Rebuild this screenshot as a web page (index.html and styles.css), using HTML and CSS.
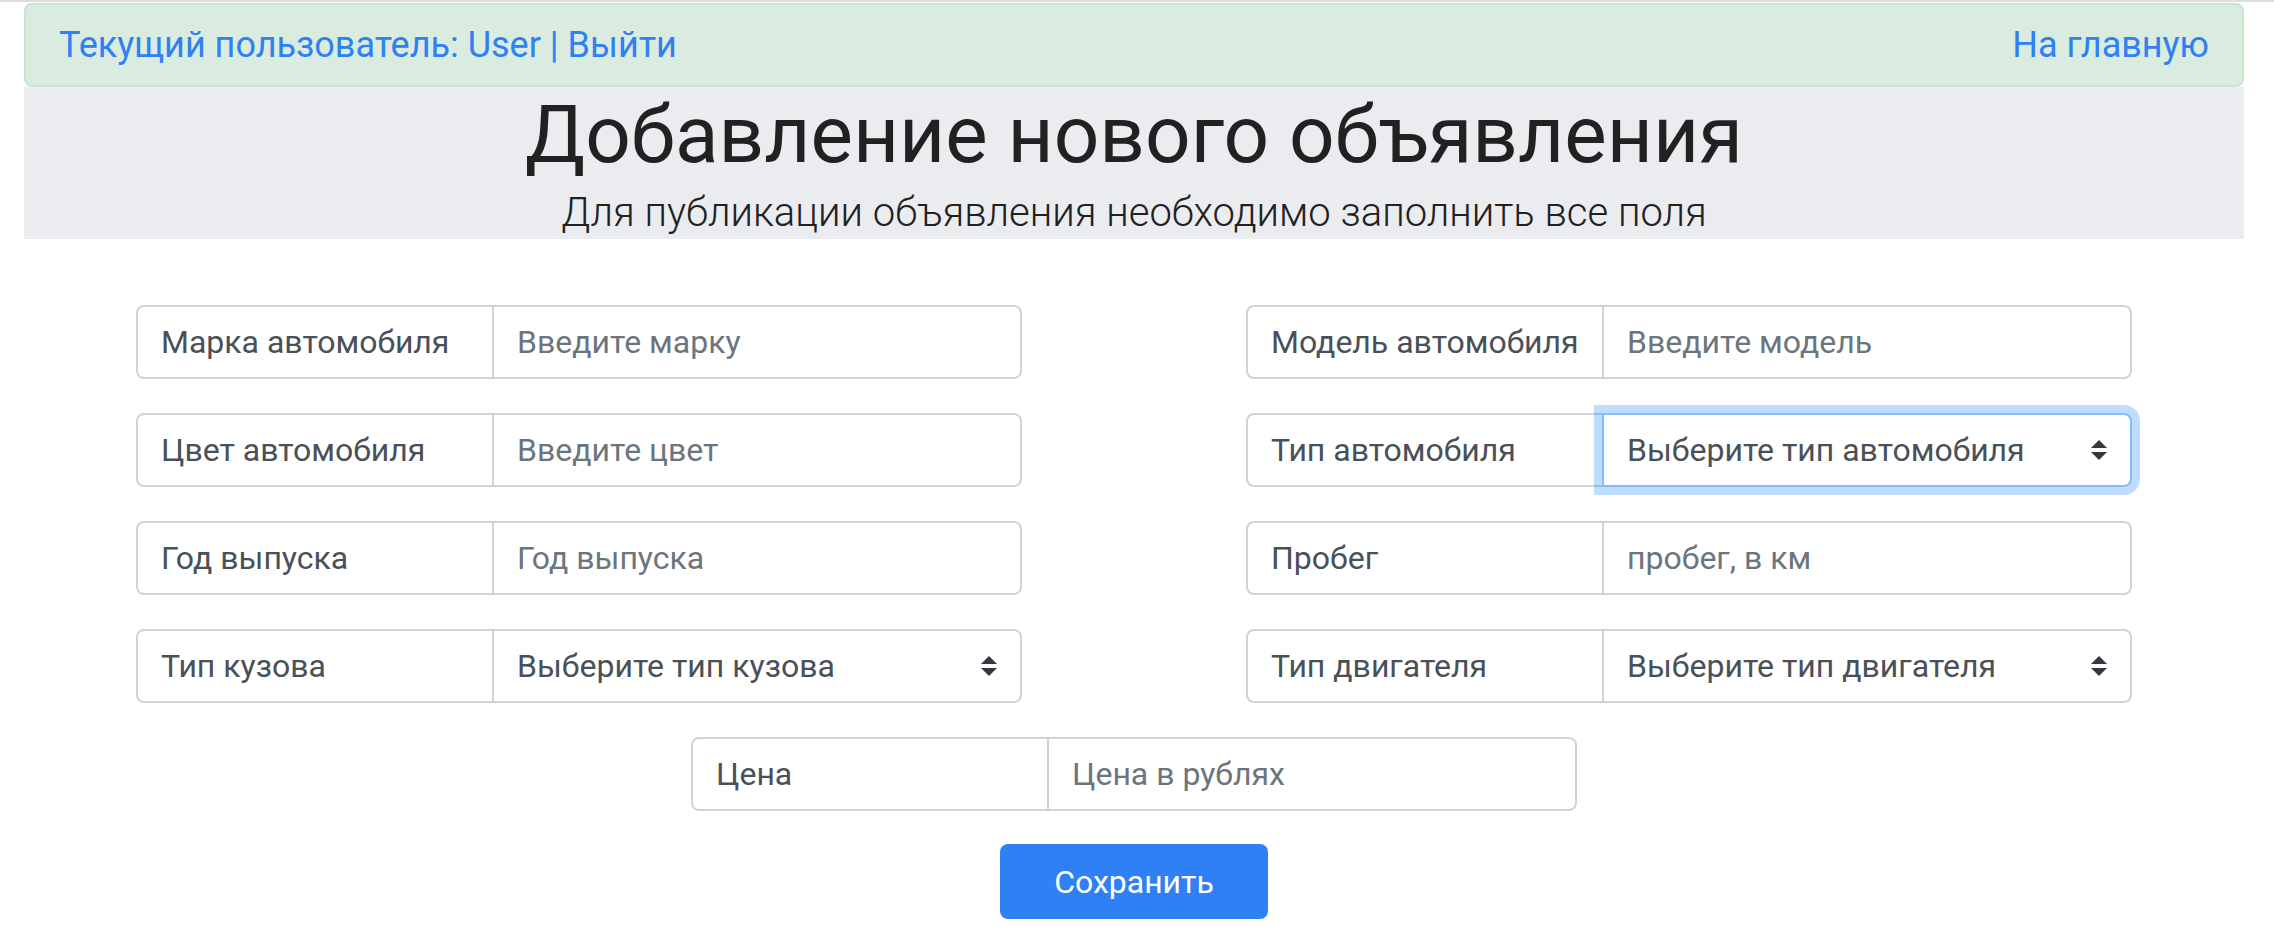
FILE: index.html
```html
<!DOCTYPE html>
<html lang="ru">
<head>
<meta charset="utf-8">
<title>Добавление нового объявления</title>
<link rel="stylesheet" href="styles.css">
</head>
<body>
<div class="topline"></div>
<div class="page">
  <div class="alert">
    <a class="alert-link" href="#">Текущий пользователь: User | Выйти</a>
    <a class="alert-link" href="#">На главную</a>
  </div>
  <div class="hero">
    <h1 class="hero-title">Добавление нового объявления</h1>
    <p class="hero-lead">Для публикации объявления необходимо заполнить все поля</p>
  </div>
  <form class="form">
    <div class="grid">
      <div class="group"><span class="label">Марка автомобиля</span><input class="field" placeholder="Введите марку"></div>
      <div class="group"><span class="label">Модель автомобиля</span><input class="field" placeholder="Введите модель"></div>
      <div class="group"><span class="label">Цвет автомобиля</span><input class="field" placeholder="Введите цвет"></div>
      <div class="group"><span class="label">Тип автомобиля</span><div class="field select focused"><span class="select-text">Выберите тип автомобиля</span><svg class="arrows" viewBox="0 0 4 5" width="16" height="20"><path d="M2 0L0 2h4zm0 5L0 3h4z" fill="#343a40"/></svg></div></div>
      <div class="group"><span class="label">Год выпуска</span><input class="field" placeholder="Год выпуска"></div>
      <div class="group"><span class="label">Пробег</span><input class="field" placeholder="пробег, в км"></div>
      <div class="group"><span class="label">Тип кузова</span><div class="field select"><span class="select-text">Выберите тип кузова</span><svg class="arrows" viewBox="0 0 4 5" width="16" height="20"><path d="M2 0L0 2h4zm0 5L0 3h4z" fill="#343a40"/></svg></div></div>
      <div class="group"><span class="label">Тип двигателя</span><div class="field select"><span class="select-text">Выберите тип двигателя</span><svg class="arrows" viewBox="0 0 4 5" width="16" height="20"><path d="M2 0L0 2h4zm0 5L0 3h4z" fill="#343a40"/></svg></div></div>
    </div>
    <div class="single">
      <div class="group"><span class="label">Цена</span><input class="field" placeholder="Цена в рублях"></div>
    </div>
    <div class="actions">
      <button class="btn" type="button">Сохранить</button>
    </div>
  </form>
</div>
</body>
</html>
```
FILE: styles.css
```css
html, body {
  margin: 0;
  padding: 0;
  background: #ffffff;
}
body {
  font-family: Roboto, "Noto Sans", "Liberation Sans", sans-serif;
  color: #212529;
}
.topline {
  height: 2px;
  background: #dcdee2;
}
.page {
  width: 2220px;
  margin: 1px 0 0 24px;
}
.alert {
  box-sizing: border-box;
  height: 84px;
  border: 2px solid #c6e5cd;
  background: #d9ecdf;
  border-radius: 8px;
  display: flex;
  justify-content: space-between;
  align-items: center;
  padding: 0 33px 0 33px;
}
.alert-link {
  font-size: 36px;
  color: #2f80f5;
  text-decoration: none;
}
.hero {
  box-sizing: border-box;
  height: 152px;
  background: #ebecf0;
  text-align: center;
  padding-top: 0;
}
.hero-title {
  margin: 0;
  font-size: 80px;
  font-weight: 400;
  line-height: 1.2;
  color: #212121;
}
.hero-lead {
  margin: 0;
  font-size: 40px;
  font-weight: 300;
  line-height: 1.5;
  color: #212121;
}
.form {
  margin-top: 66px;
}
.grid {
  display: grid;
  grid-template-columns: 1fr 1fr;
  row-gap: 34px;
  justify-items: center;
}
.single {
  display: flex;
  justify-content: center;
  margin-top: 34px;
}
.group {
  box-sizing: border-box;
  width: 886px;
  height: 74px;
  display: flex;
}
.label {
  box-sizing: border-box;
  width: 358px;
  flex: none;
  display: flex;
  align-items: center;
  padding-left: 23px;
  border: 2px solid #ced4da;
  border-radius: 8px 0 0 8px;
  background: #ffffff;
  font-size: 32px;
  color: #495057;
}
.field {
  box-sizing: border-box;
  flex: 1;
  min-width: 0;
  height: 74px;
  margin: 0 0 0 -2px;
  border: 2px solid #ced4da;
  border-radius: 0 8px 8px 0;
  background: #ffffff;
  padding: 0 23px;
  font-family: Roboto, "Noto Sans", "Liberation Sans", sans-serif;
  font-size: 32px;
  color: #495057;
  outline: none;
}
.field::placeholder {
  color: #6c757d;
  opacity: 1;
}
.select {
  display: flex;
  align-items: center;
}
.select-text {
  flex: 1;
}
.arrows {
  flex: none;
  display: block;
}
.focused {
  position: relative;
  z-index: 1;
  border-color: #80bdff;
  box-shadow: 0 0 0 8px rgba(0, 123, 255, 0.25);
}
.actions {
  display: flex;
  justify-content: center;
  margin-top: 33px;
}
.btn {
  width: 268px;
  height: 75px;
  border: 0;
  border-radius: 8px;
  background: #2f7ff5;
  color: #ffffff;
  font-family: Roboto, "Noto Sans", "Liberation Sans", sans-serif;
  font-size: 32px;
  padding: 0;
}
```
